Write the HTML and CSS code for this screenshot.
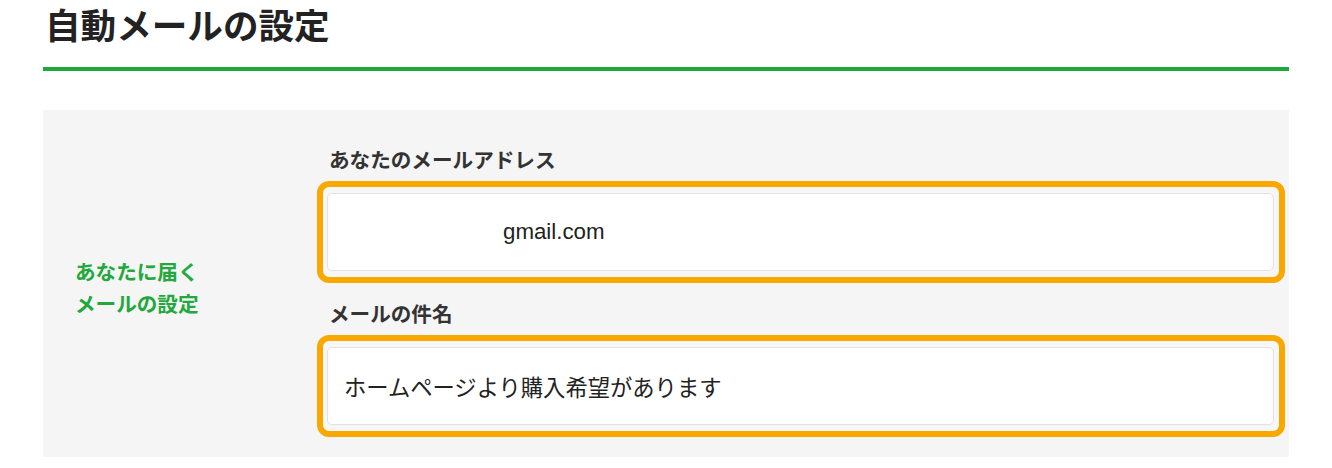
FILE: index.html
```html
<!DOCTYPE html>
<html lang="ja">
<head>
    <meta charset="UTF-8">
    <meta name="viewport" content="width=device-width, initial-scale=1.0">
    <title>自動メールの設定</title>
    <link rel="stylesheet" href="styles.css">
</head>
<body>
    <div class="container">
        <h1 class="page-title">自動メールの設定</h1>

        <div class="settings">
            <div class="settings-side">
                <p>あなたに届く<br>メールの設定</p>
            </div>
            <div class="settings-main">
                <div class="field-group">
                    <label for="mail-address">あなたのメールアドレス</label>
                    <div class="highlight">
                        <input type="text" id="mail-address" class="field field-masked" value="gmail.com">
                    </div>
                </div>
                <div class="field-group">
                    <label for="mail-subject">メールの件名</label>
                    <div class="highlight">
                        <input type="text" id="mail-subject" class="field" value="ホームページより購入希望があります">
                    </div>
                </div>
            </div>
        </div>
    </div>
</body>
</html>
```

FILE: styles.css
```css
body { margin: 0; padding: 0; background-color: #fff; color: #333; font-family: "Liberation Sans", "Noto Sans CJK JP", sans-serif; }
.container { margin: 0 43px; padding-top: 6px; }
.page-title { margin: 0; padding: 0 2px 18px; font-size: 35.6px; line-height: 43px; font-weight: 700; color: #222; border-bottom: 4px solid #1fa83e; }

.settings { display: flex; margin-top: 39px; padding: 36px 4px 20px 0; background-color: #f5f5f5; }
.settings-side { width: 242px; padding-left: 32px; display: flex; align-items: center; }
.settings-side p { margin: 0 0 6px; font-size: 20.6px; line-height: 32px; font-weight: 700; color: #22a83c; }
.settings-main { flex: 1; }

.field-group + .field-group { margin-top: 17px; }
.field-group label { display: block; margin: 0 0 5px 12px; font-size: 20.6px; line-height: 30px; font-weight: 700; color: #333; }

.highlight { border: 6px solid #f9a800; border-radius: 12px; padding: 6px 5px 6px 4px; background-color: #f7f7f7; }
.field { display: block; box-sizing: border-box; width: 100%; height: 78px; margin: 0; padding: 0 16px; font-family: inherit; font-size: 22.3px; color: #222; background-color: #fff; border: 1px solid #e2e2e2; border-radius: 5px; outline: none; }
.field-masked { padding-left: 175px; }
```
